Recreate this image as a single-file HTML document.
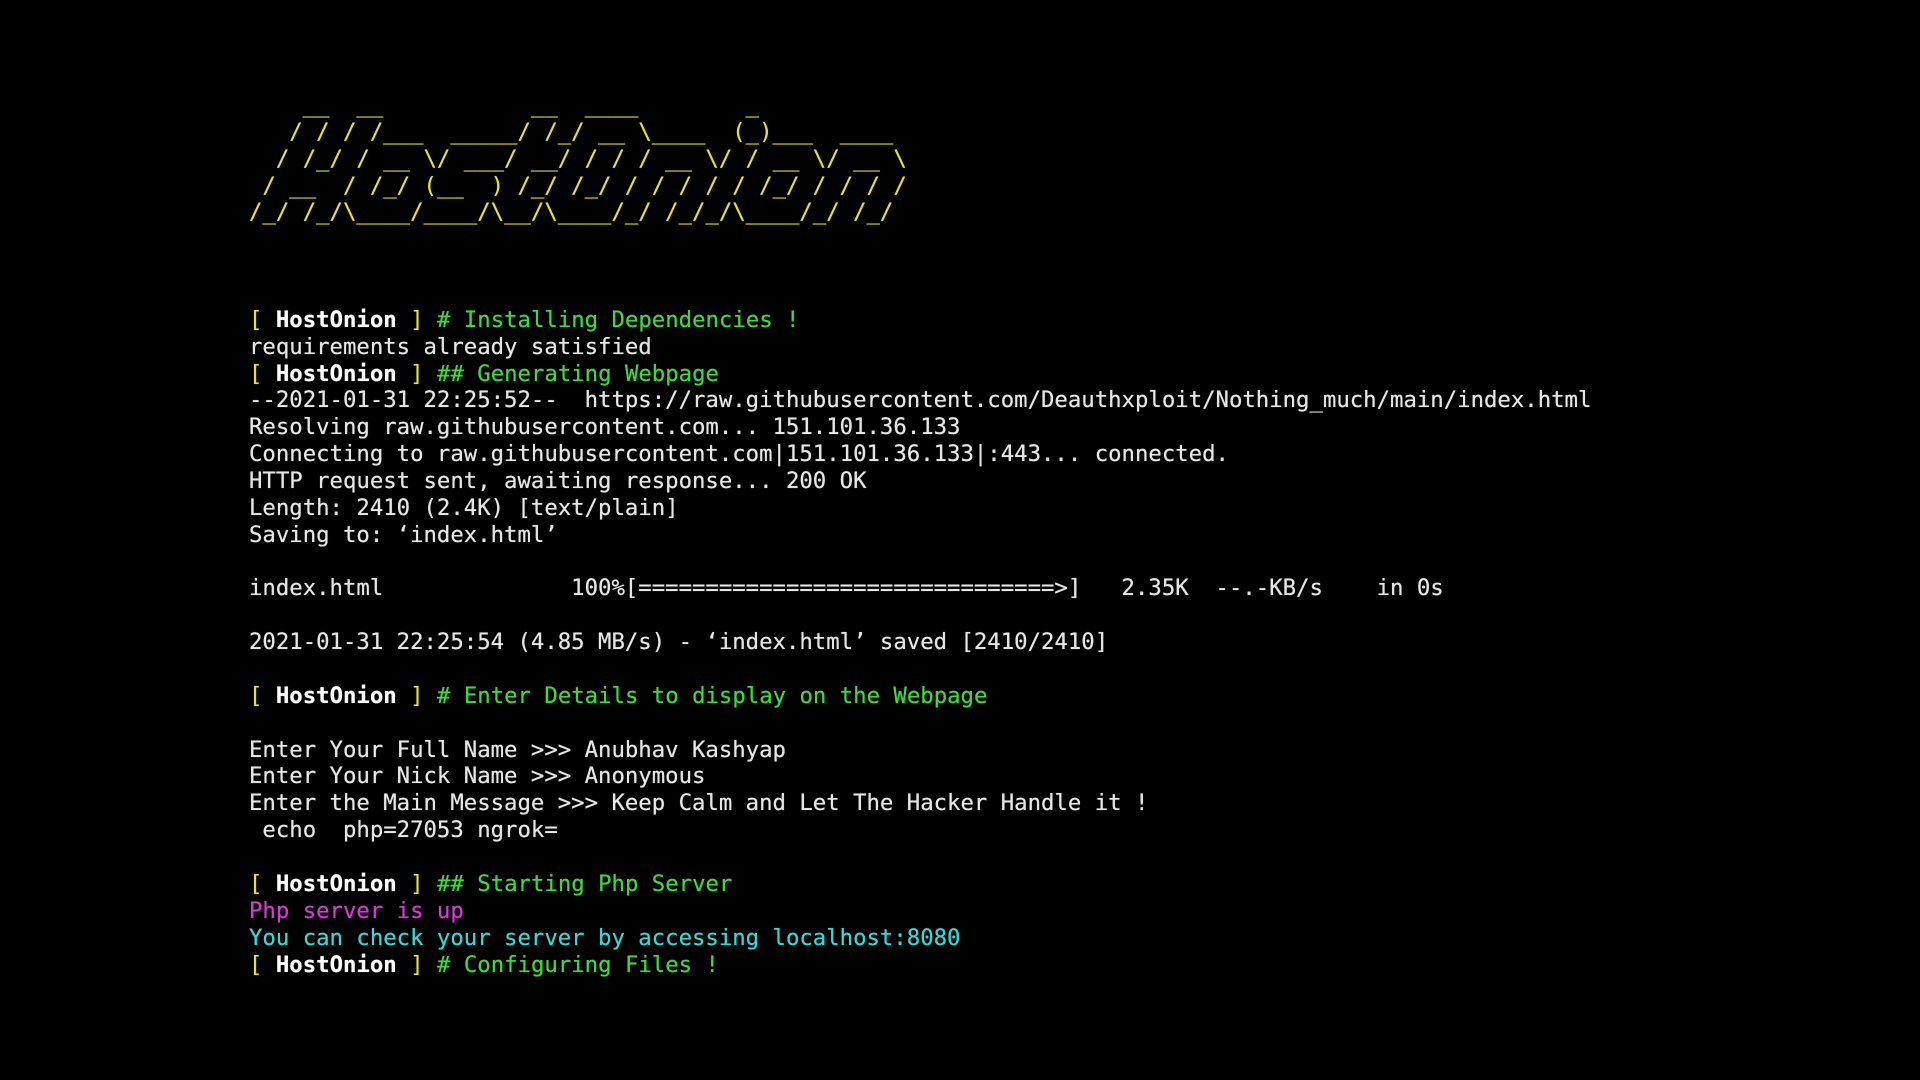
<!DOCTYPE html>
<html><head><meta charset="utf-8"><style>
html,body{margin:0;padding:0;background:#000;width:1920px;height:1080px;overflow:hidden}
pre{position:absolute;left:249px;top:92px;margin:0;font-family:"DejaVu Sans Mono","Liberation Mono",monospace;font-size:22.3px;line-height:26.86px;color:#e6e6e6;white-space:pre;text-shadow:0 0 0.6px currentColor}
.y{color:#e6e040}.w{color:#fff;font-weight:bold}.g{color:#3fd83f}.m{color:#d838d8}.c{color:#38d8d8}
</style></head><body><pre><span class="y">    __  __           __  ____        _           
   / / / /___  _____/ /_/ __ \____  (_)___  ____ 
  / /_/ / __ \/ ___/ __/ / / / __ \/ / __ \/ __ \
 / __  / /_/ (__  ) /_/ /_/ / / / / / /_/ / / / /
/_/ /_/\____/____/\__/\____/_/ /_/_/\____/_/ /_/ </span>



<span class="y">[</span> <span class="w">HostOnion</span> <span class="y">]</span> <span class="g"># Installing Dependencies !</span>
requirements already satisfied
<span class="y">[</span> <span class="w">HostOnion</span> <span class="y">]</span> <span class="g">## Generating Webpage</span>
--2021-01-31 22:25:52--  https://raw.githubusercontent.com/Deauthxploit/Nothing_much/main/index.html
Resolving raw.githubusercontent.com... 151.101.36.133
Connecting to raw.githubusercontent.com|151.101.36.133|:443... connected.
HTTP request sent, awaiting response... 200 OK
Length: 2410 (2.4K) [text/plain]
Saving to: ‘index.html’

index.html              100%[===============================>]   2.35K  --.-KB/s    in 0s

2021-01-31 22:25:54 (4.85 MB/s) - ‘index.html’ saved [2410/2410]

<span class="y">[</span> <span class="w">HostOnion</span> <span class="y">]</span> <span class="g"># Enter Details to display on the Webpage</span>

Enter Your Full Name >>> Anubhav Kashyap
Enter Your Nick Name >>> Anonymous
Enter the Main Message >>> Keep Calm and Let The Hacker Handle it !
 echo  php=27053 ngrok=

<span class="y">[</span> <span class="w">HostOnion</span> <span class="y">]</span> <span class="g">## Starting Php Server</span>
<span class="m">Php server is up</span>
<span class="c">You can check your server by accessing localhost:8080</span>
<span class="y">[</span> <span class="w">HostOnion</span> <span class="y">]</span> <span class="g"># Configuring Files !</span></pre></body></html>
